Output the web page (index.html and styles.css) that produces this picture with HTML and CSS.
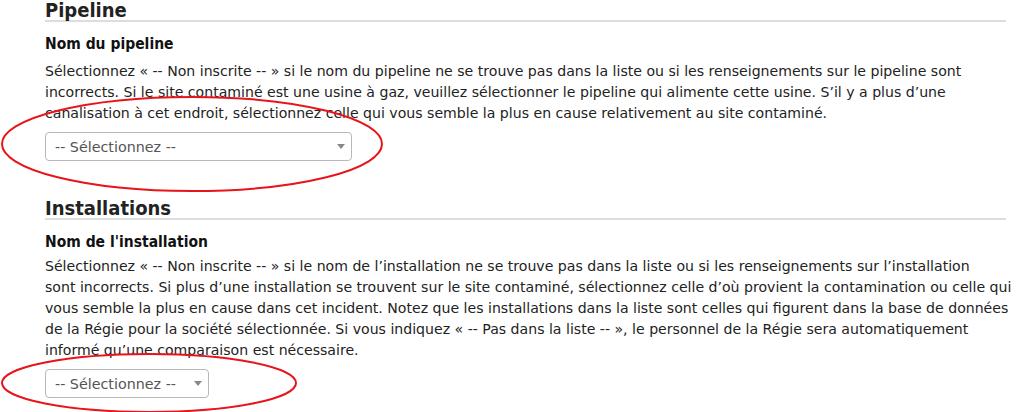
FILE: index.html
```html
<!DOCTYPE html>
<html lang="fr">
<head>
<meta charset="utf-8">
<title>Pipeline</title>
<link rel="stylesheet" href="styles.css">
</head>
<body>
<div class="page">
  <section class="group">
    <h2 class="group-title">Pipeline</h2>
    <h3 class="field-label">Nom du pipeline</h3>
    <p class="help">Sélectionnez « -- Non inscrite -- » si le nom du pipeline ne se trouve pas dans la liste ou si les renseignements sur le pipeline sont incorrects. Si le site contaminé est une usine à gaz, veuillez sélectionner le pipeline qui alimente cette usine. S’il y a plus d’une canalisation à cet endroit, sélectionnez celle qui vous semble la plus en cause relativement au site contaminé.</p>
    <div class="select select-wide"><span class="select-text">-- Sélectionnez --</span><span class="caret"></span></div>
  </section>
  <section class="group group-second">
    <h2 class="group-title">Installations</h2>
    <h3 class="field-label field-label-tight">Nom de l'installation</h3>
    <p class="help">Sélectionnez « -- Non inscrite -- » si le nom de l’installation ne se trouve pas dans la liste ou si les renseignements sur l’installation<br>sont incorrects. Si plus d’une installation se trouvent sur le site contaminé, sélectionnez celle d’où provient la contamination ou celle qui vous semble la plus en cause dans cet incident. Notez que les installations dans la liste sont celles qui figurent dans la base de données de la Régie pour la société sélectionnée. Si vous indiquez « -- Pas dans la liste -- », le personnel de la Régie sera automatiquement informé qu’une comparaison est nécessaire.</p>
    <div class="select select-narrow"><span class="select-text">-- Sélectionnez --</span><span class="caret"></span></div>
  </section>
  <svg class="annotations" width="1017" height="412" viewBox="0 0 1017 412">
    <ellipse cx="192" cy="144" rx="190" ry="47" fill="none" stroke="#e8141b" stroke-width="2"/>
    <ellipse cx="149" cy="383" rx="147" ry="29" fill="none" stroke="#e8141b" stroke-width="2"/>
  </svg>
</div>
</body>
</html>
```
FILE: styles.css
```css
html, body {
  margin: 0;
  padding: 0;
  background: #fff;
}
.page {
  position: relative;
  width: 1017px;
  height: 412px;
  overflow: hidden;
  padding: 0 11px 0 45px;
  box-sizing: border-box;
  font-family: "DejaVu Sans", sans-serif;
  color: #222;
}
.group-title {
  margin: 0;
  font-family: "DejaVu Sans Condensed", "DejaVu Sans", sans-serif;
  font-size: 20px;
  line-height: 20px;
  font-weight: bold;
  color: #222;
  border-bottom: 2px solid #ddd;
}
.group-second {
  margin-top: 37px;
}
.field-label {
  margin: 12px 0 6px;
  font-family: "DejaVu Sans Condensed", "DejaVu Sans", sans-serif;
  font-size: 15.5px;
  line-height: 21px;
  font-weight: bold;
  color: #111;
}
.field-label-tight {
  margin-bottom: 3px;
}
.help {
  margin: 0 -8px 8px 0;
  font-size: 14.1px;
  line-height: 21px;
  color: #222;
}
.select {
  display: flex;
  align-items: center;
  justify-content: space-between;
  height: 29px;
  box-sizing: border-box;
  border: 1px solid #b8b8b8;
  border-radius: 4px;
  padding: 0 6px 0 9px;
  background: #fff;
}
.select-wide { width: 307px; }
.select-narrow { width: 164px; }
.select-text {
  font-size: 14.3px;
  color: #555;
}
.caret {
  width: 0;
  height: 0;
  border-left: 4px solid transparent;
  border-right: 4px solid transparent;
  border-top: 5px solid #888;
}
.annotations {
  position: absolute;
  left: 0;
  top: 0;
  pointer-events: none;
}
```
